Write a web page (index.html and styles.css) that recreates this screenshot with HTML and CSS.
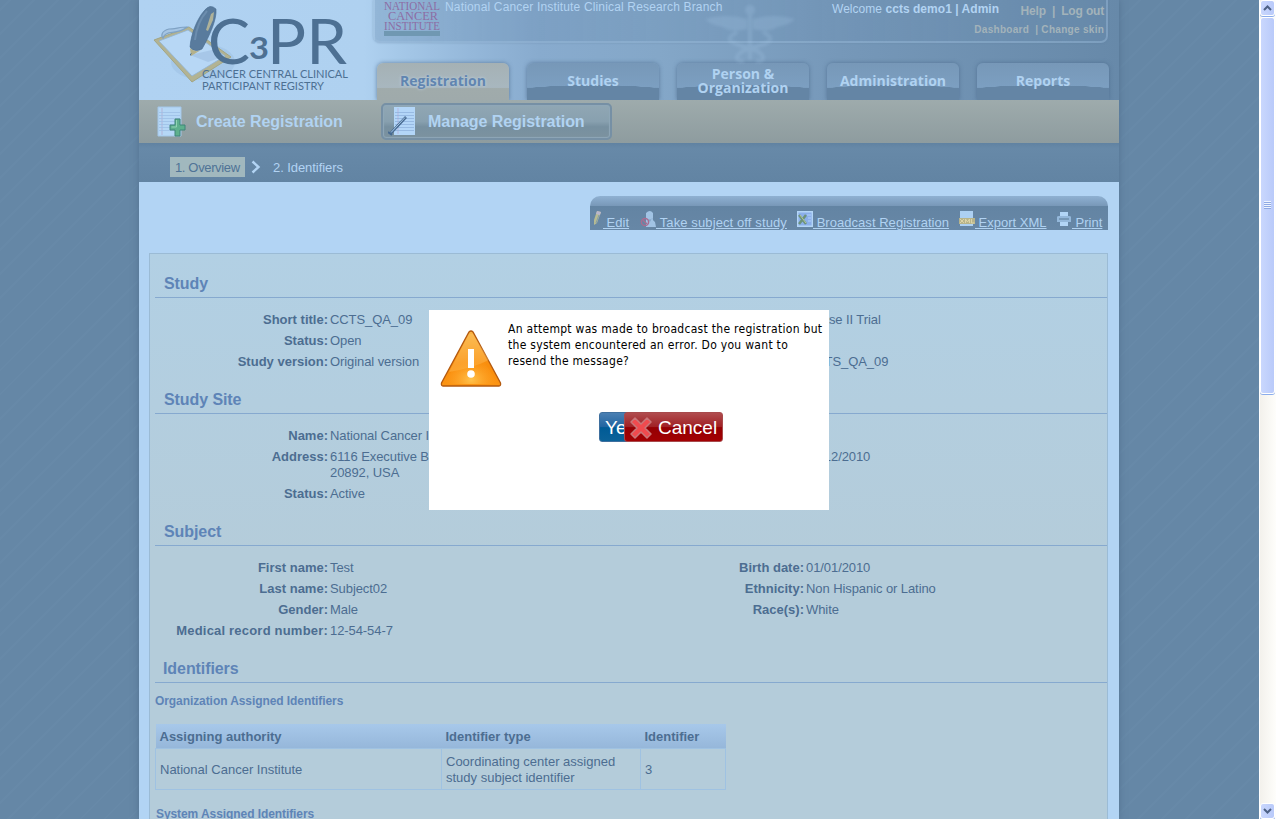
FILE: index.html
```html
<!DOCTYPE html>
<html lang="en">
<head>
<meta charset="utf-8">
<title>C3PR - Manage Registration</title>
<link rel="stylesheet" href="styles.css">
</head>
<body>
<div class="viewport">
  <div class="page">
    <header class="header">
      <svg class="caduceus" width="96" height="58" viewBox="0 0 96 58">
        <g fill="#a9cae9">
          <circle cx="47" cy="5" r="5"/>
          <path d="M2 14 Q24 8 44 14 L44 24 Q28 28 20 22 Q8 20 2 14Z M92 14 Q70 8 50 14 L50 24 Q66 28 74 22 Q86 20 92 14Z"/>
          <path d="M45 10h4v45h-4z"/>
        </g>
        <path d="M34 27 C14 38 40 40 54 46 C64 52 60 57 53 56 M60 27 C80 38 54 40 40 46 C30 52 34 57 41 56" fill="none" stroke="#a9cae9" stroke-width="4"/>
      </svg>
      <div class="brand">
        <svg width="234" height="100" viewBox="139 0 234 100">
          <ellipse cx="203" cy="62" rx="32" ry="18" fill="#8fb3d7" opacity=".3"/>
          <path d="M154 40 L189 27 L231 57 L192 82Z" fill="#b2b393" stroke="#a3a684" stroke-width="1"/>
          <path d="M159 41 L188 30 L225 56 L192 76Z" fill="#b7d7f5" stroke="#91b4d6" stroke-width=".8"/>
          <path d="M190 55 L212 50 L222 57 L208 62Z" fill="#9fc1e2" opacity=".7"/>
          <path d="M163 38 C166 29 176 36 187 27 C181 27 174 29 169 29 C161 31 161 36 163 38Z" fill="#a5c5e4" stroke="#7fa2c4" stroke-width="1.200"/>
          <path d="M190 47 C191 34 197 19 204 11 Q210 3 216 9 C217 19 210 35 202 49 Q194 53 190 47Z" fill="#597b9d" stroke="#486b8e" stroke-width=".6"/>
          <path d="M206 30 L211 14 L214 12 L213 20 L208 31Z" fill="#afb299"/>
          <path d="M195 40 Q197 22 207 11" fill="none" stroke="#6c8dae" stroke-width="2"/>
          <path d="M190 48 Q195 53 201 50 L191 56Z" fill="#b4b18b"/>
          <path d="M190 54l2-1-2 3z" fill="#446788"/>
          <text class="logo-big" x="208" y="64" textLength="42" lengthAdjust="spacingAndGlyphs">C</text>
          <text class="logo-three" x="249" y="59" textLength="20" lengthAdjust="spacingAndGlyphs">3</text>
          <text class="logo-big" x="267" y="64" textLength="80" lengthAdjust="spacingAndGlyphs">PR</text>
          <text class="logo-sub" x="202" y="78" textLength="146" lengthAdjust="spacingAndGlyphs">CANCER CENTRAL CLINICAL</text>
          <text class="logo-sub" x="202" y="90" textLength="122" lengthAdjust="spacingAndGlyphs">PARTICIPANT REGISTRY</text>
        </svg>
      </div>
      <div class="head-right">
        <div class="info">
          <svg class="nci" width="58" height="37" viewBox="0 0 58 37">
            <rect x="0" y="31" width="56" height="5" fill="#7098b2"/>
            <text x="0" y="9.500" textLength="56" lengthAdjust="spacingAndGlyphs">NATIONAL</text>
            <text x="4" y="19.800" textLength="50" lengthAdjust="spacingAndGlyphs">CANCER</text>
            <text x="0" y="30" textLength="56" lengthAdjust="spacingAndGlyphs">INSTITUTE</text>
          </svg>
          <span class="branch">National Cancer Institute Clinical Research Branch</span>
          <span class="welcome">Welcome <b>ccts demo1 | Admin</b></span>
          <div class="links">
            <div class="links-main"><b>Help</b><b>|</b><b>Log out</b></div>
            <div class="links-sub"><b>Dashboard</b><b>| Change skin</b></div>
          </div>
        </div>
        <nav class="tabs">
          <div class="tab tab-active"><span>Registration</span></div>
          <div class="tab"><span>Studies</span></div>
          <div class="tab"><span>Person &amp;<br>Organization</span></div>
          <div class="tab"><span>Administration</span></div>
          <div class="tab"><span>Reports</span></div>
        </nav>
      </div>
    </header>

    <div class="subnav">
      <div class="sub-item">
        <svg width="30" height="32" viewBox="0 0 30 32">
          <path d="M1 1h23v29H1z" fill="#b5d7f6" stroke="#a3c6e8"/>
          <path d="M5 2v27" stroke="#b2a9cf" stroke-width=".8"/>
          <path d="M2 6.500h21M2 9.500h21M2 12.500h21M2 15.500h21M2 18.500h21M2 21.500h21M2 24.500h21" stroke="#9dbfe6" stroke-width=".8"/>
          <path d="M18 13h5v6h5v5h-5v6h-5v-6h-5v-5h5z" fill="#5eb08d" stroke="#3e8478"/>
          <path d="M19.500 14v7h-5" fill="none" stroke="#92d2b5"/>
        </svg>
        <span>Create Registration</span>
      </div>
      <div class="sub-item sub-current">
        <svg width="30" height="32" viewBox="0 0 30 32">
          <path d="M6 1h21v28H6z" fill="#b3d6f8"/>
          <path d="M10 2v26" stroke="#b9a9d2" stroke-width=".7"/>
          <path d="M7 6.500h19M7 9.500h19M7 12.500h19M7 15.500h19M7 18.500h19M7 21.500h19M7 24.500h19" stroke="#8fb3dd" stroke-width=".8"/>
          <path d="M2 28L18 11" stroke="#476a91" stroke-width="2.600"/>
          <path d="M3 26.500L17 11.500" stroke="#a5c7e8" stroke-width="1"/>
          <path d="M0 26l4 3" stroke="#476a91" stroke-width="2"/>
        </svg>
        <span>Manage Registration</span>
      </div>
    </div>

    <div class="crumbs">
      <span class="crumb-on">1. Overview</span>
      <svg width="10" height="14" viewBox="0 0 10 14"><path d="M1.500 1.500L7.500 7L1.500 12.500" fill="none" stroke="#b2d4f4" stroke-width="2.400"/></svg>
      <span class="crumb">2. Identifiers</span>
    </div>

    <main class="content">
      <div class="toolbar">
        <a><svg width="11" height="16" viewBox="0 0 11 16"><path d="M5 0l4 1-4 11-3 2V9z" fill="#b7bb92"/><path d="M5 0l4 1-1 3-4-1z" fill="#b9b6cd"/><path d="M7 4L4 12" stroke="#829cab"/></svg><u class="t-edit">&nbsp;Edit</u></a>
        <a><svg width="16" height="16" viewBox="0 0 16 16"><path d="M6 2q4-4 7 0v5q-1 2 2 4l1 5H6V9z" fill="#a1c3e4"/><path d="M7 7q3 3 5 0l-2 4z" fill="#82a6ca"/><circle cx="5" cy="11" r="3.600" fill="none" stroke="#a96d91" stroke-width="1.500"/><path d="M3 9l4 4" stroke="#a96d91" stroke-width="1.500"/></svg><u class="t-take">&nbsp;Take subject off study</u></a>
        <a><svg width="16" height="16" viewBox="0 0 16 16"><path d="M.7.700h14.600v14.600H.7z" fill="#8bafea" stroke="#b3d5f6" stroke-width="1.400"/><path d="M2 4l7 9M9 4l-7 9" stroke="#6c927b" stroke-width="2.500"/><path d="M3 4l6 8" stroke="#b4c99e"/><path d="M10 4h4M11 7h3M11 10h3" stroke="#b1d2fa"/></svg><u class="t-cast">&nbsp;Broadcast Registration</u></a>
        <a><svg width="16" height="16" viewBox="0 0 16 16"><path d="M1 0h13v15H1z" fill="#acd0f2"/><path d="M0 7h16v6H0z" fill="#b7b48b"/><path d="M1 8l4 4M5 8l-4 4M6.500 12V8l2 3 2-3v4M12.500 8v4h3" fill="none" stroke="#e0d8aa" stroke-width=".9"/></svg><u class="t-xml">&nbsp;Export XML</u></a>
        <a><svg width="16" height="16" viewBox="0 0 16 16"><path d="M4 1h8v4H4z" fill="#b2d5f6"/><path d="M1 6q0-1 2-1h10q2 0 2 1v5H1z" fill="#94b8db"/><path d="M3 7h10v2H3z" fill="#7799b8"/><path d="M4 11h8v4H4z" fill="#b2d5f6"/></svg><u class="t-print">&nbsp;Print</u></a>
      </div>

      <div class="panel">
        <h2>Study</h2>
        <div class="cols">
          <dl>
            <dt>Short title:</dt><dd>CCTS_QA_09</dd>
            <dt>Status:</dt><dd>Open</dd>
            <dt>Study version:</dt><dd>Original version</dd>
          </dl>
          <dl>
            <dt></dt><dd>Phase II Trial</dd>
            <dt></dt><dd>&nbsp;</dd>
            <dt></dt><dd>CCTS_QA_09</dd>
          </dl>
        </div>
        <h2>Study Site</h2>
        <div class="cols">
          <dl>
            <dt>Name:</dt><dd>National Cancer Institute</dd>
            <dt>Address:</dt><dd>6116 Executive Blvd<br>20892, USA</dd>
            <dt>Status:</dt><dd>Active</dd>
          </dl>
          <dl>
            <dt></dt><dd>&nbsp;</dd>
            <dt></dt><dd>01/12/2010</dd>
          </dl>
        </div>
        <h2>Subject</h2>
        <div class="cols">
          <dl>
            <dt>First name:</dt><dd>Test</dd>
            <dt>Last name:</dt><dd>Subject02</dd>
            <dt>Gender:</dt><dd>Male</dd>
            <dt class="wide">Medical record number:</dt><dd>12-54-54-7</dd>
          </dl>
          <dl>
            <dt>Birth date:</dt><dd>01/01/2010</dd>
            <dt>Ethnicity:</dt><dd>Non Hispanic or Latino</dd>
            <dt>Race(s):</dt><dd>White</dd>
          </dl>
        </div>
        <h2 class="h-ident">Identifiers</h2>
        <h3>Organization Assigned Identifiers</h3>
        <table>
          <tr><th class="c1">Assigning authority</th><th class="c2">Identifier type</th><th class="c3">Identifier</th></tr>
          <tr><td>National Cancer Institute</td><td>Coordinating center assigned study subject identifier</td><td>3</td></tr>
        </table>
        <h3 class="h-system">System Assigned Identifiers</h3>
      </div>
    </main>
  </div>

  <div class="scrollbar">
    <div class="sb-btn"><svg width="9" height="6" viewBox="0 0 9 6"><path d="M1 5l3.500-3.500L8 5" fill="none" stroke="#4d6185" stroke-width="2"/></svg></div>
    <div class="sb-thumb"><i></i><i></i><i></i><i></i></div>
    <div class="sb-track"></div>
    <div class="sb-btn"><svg width="9" height="6" viewBox="0 0 9 6"><path d="M1 1l3.500 3.500L8 1" fill="none" stroke="#4d6185" stroke-width="2"/></svg></div>
  </div>

  <div class="dialog">
    <div class="dialog-body">
      <svg width="64" height="60" viewBox="0 0 64 60">
        <defs>
          <linearGradient id="warn" x1="0" y1="0" x2="0" y2="1"><stop offset="0" stop-color="#f9b545"/><stop offset=".6" stop-color="#f98d0c"/><stop offset="1" stop-color="#fb9413"/></linearGradient>
          <radialGradient id="glow" cx=".5" cy=".9" r=".5"><stop offset="0" stop-color="#ffc34d"/><stop offset="1" stop-color="#ff9d20" stop-opacity="0"/></radialGradient>
        </defs>
        <path d="M30 2Q32 0 34 2L61.500 53Q62 56 60 56H4Q2 56 2.500 53Z" fill="url(#warn)" stroke="#b4590e" stroke-width="1.300"/>
        <path d="M30 4L10 42Q34 38 50 30L34 4Z" fill="#ffd07b" opacity=".3"/>
        <path d="M5 54L32 10L59 54Z" fill="url(#glow)"/>
        <path d="M29 19h6v19h-6z" fill="#fff"/><circle cx="32" cy="44" r="3.800" fill="#fff"/>
      </svg>
      <p>An attempt was made to broadcast the registration but the system encountered an error. Do you want to resend the message?</p>
    </div>
    <div class="dialog-actions">
      <span class="btn btn-yes">Yes</span>
      <span class="btn btn-cancel">
        <svg width="24" height="24" viewBox="0 0 24 24"><path d="M6 2L12 8L18 2L22 6L16 12L22 18L18 22L12 16L6 22L2 18L8 12L2 6Z" fill="#f04a4e" stroke="#c9777a" stroke-width="1.500" stroke-linejoin="round"/></svg>
        <span>Cancel</span>
      </span>
    </div>
  </div>
</div>
</body>
</html>
```

FILE: styles.css
```css
* { box-sizing: border-box; }

body {
  margin: 0;
  overflow: hidden;
  font: 13px/16px "Liberation Sans", Arial, sans-serif;
  color: #4c6d91;
}

h2, h3, p, dl, dd { margin: 0; }

.viewport {
  position: relative;
  display: flex;
  width: 1276px;
  height: 819px;
  overflow: hidden;
  padding-left: 139px;
  background: repeating-linear-gradient(135deg, #6587a6 0 6px, #6789a8 6px 8px, #6587a6 8px 17px);
}

.page {
  width: 980px;
  height: 819px;
  margin-right: 140px;
  overflow: hidden;
  flex: none;
  background: #b2d4f4;
  box-shadow: 0 0 7px rgba(70, 100, 130, .6);
}

/* Header */
.header {
  position: relative;
  display: grid;
  grid-template-columns: 234px 746px;
  height: 100px;
  background: linear-gradient(90deg, #b0d2f2 0, #afd1f0 225px, #a5c8e8 260px, #95b8da 330px, #88abce 400px, #84a7c8 520px, #7698b9 700px, #6789a9 980px);
}

.caduceus { position: absolute; left: 564px; top: 5px; opacity: .22; filter: blur(1.5px); }

.brand svg { display: block; }
.logo-big { font: 61px Lato, sans-serif; fill: #4d7093; }
.logo-three { font: bold 30px Lato, sans-serif; fill: #4d7093; }
.logo-sub { font: 11.500px Lato, sans-serif; fill: #4d7093; }

.info {
  display: flex;
  width: 735px;
  height: 43px;
  padding-left: 9px;
  border: 2px solid rgba(160, 192, 222, .4);
  border-top: 0;
  border-radius: 0 0 7px 7px;
  background: linear-gradient(90deg, rgba(100, 137, 174, .35), rgba(100, 137, 174, .12));
  box-shadow: 0 0 2px rgba(85, 115, 150, .4);
  font-size: 12px;
  line-height: 14px;
  color: #b2d3f2;
}

.nci { flex: none; overflow: visible; }
.nci text { font: 13px "Liberation Serif", serif; fill: #8d6da4; }
.branch { flex: none; width: 279px; margin-left: 3px; white-space: nowrap; letter-spacing: .16px; }
.welcome { flex: none; margin: 2px 0 0 108px; white-space: nowrap; letter-spacing: .04px; }
.links { flex: none; width: 129px; margin: 4px 0 0 -24px; color: #a3b3ba; white-space: nowrap; }
.links-main { display: flex; justify-content: flex-end; gap: 6px; letter-spacing: -.15px; }
.links-sub { display: flex; justify-content: flex-end; gap: 6px; margin-top: 5px; font-size: 10px; letter-spacing: .3px; }

.tabs { display: flex; gap: 18px; padding: 20px 0 0 4px; }

.tab {
  display: flex;
  align-items: center;
  justify-content: center;
  width: 132px;
  height: 37px;
  border-radius: 6px 6px 0 0;
  background: radial-gradient(ellipse 110px 15px at 50% 100%, #6485a5 0 98%, transparent 100%), linear-gradient(#7798b8 0, #7c9fc1 66%, #6687a7 68%, #6384a3 100%);
  box-shadow: 0 0 4px rgba(75, 106, 140, .75);
  font: bold 14px/14px "Open Sans", "Noto Sans", sans-serif;
  text-align: center;
  color: #b0d2f1;
}
.tab span { padding-bottom: 1px; }

.tab-active {
  background: linear-gradient(#a5b1b4 0, #a8b7bf 66%, #a0abab 69%, #9faaab 100%);
  color: #6185b0;
  text-shadow: 0 0 3px #c0d5e5;
}

/* Secondary navigation */
.subnav {
  position: relative;
  display: flex;
  height: 43px;
  padding: 3px 0 3px 18px;
  background: linear-gradient(#9eabac, #8e9c9f);
}

.sub-item {
  display: flex;
  align-items: center;
  gap: 9px;
  width: 224px;
  height: 37px;
  font-size: 16px;
  font-weight: bold;
  letter-spacing: -.04px;
  color: #b1d3f2;
  white-space: nowrap;
}

.sub-current {
  width: 231px;
  padding-left: 5px;
  border: 2px solid #7690a5;
  border-radius: 5px;
  background: linear-gradient(#90a7b4 0, #88a0af 50%, #7790a0 66%, #7c929f 100%);
  box-shadow: inset 0 0 1px 1px #8fa8b8;
}
.sub-current span { padding-left: 1px; }

/* Breadcrumb */
.crumbs {
  display: flex;
  align-items: center;
  height: 39px;
  padding: 10px 0 0 31px;
  background: linear-gradient(#6082a1, #6789a8 5px, #6284a3);
  color: #b2d3f3;
}
.crumbs svg { margin: 0 12px 2px 6px; }
.crumb-on { width: 75px; height: 20px; margin-bottom: 1px; padding: 3px 0 0 5px; background: #a1b8be; color: #4f7396; letter-spacing: -.36px; }
.crumb { letter-spacing: -.07px; }

/* Content */
.content { padding: 14px 10px 0; }

.toolbar {
  display: flex;
  gap: 10px;
  width: 518px;
  height: 34px;
  margin-left: auto;
  margin-right: 1px;
  padding: 15px 0 0 2px;
  border-radius: 10px 10px 0 0;
  background: linear-gradient(#8fb1d2 0, #7898b8 10px, #6384a3 10px, #6787a6 100%);
  color: #b0d2f2;
}
.toolbar a { display: flex; flex: none; }
.toolbar u { padding-top: 4px; white-space: nowrap; text-underline-offset: 1px; }
.t-edit { width: 27px; }
.t-take { width: 131px; letter-spacing: .11px; }
.t-cast { width: 136px; letter-spacing: .04px; }
.t-xml { width: 71px; }
.t-print { width: 31px; }

.panel {
  width: 959px;
  height: 600px;
  margin-top: 23px;
  padding: 4px 0 0 5px;
  border: 1px solid #9bbbd5;
  background: linear-gradient(#b2d0e4, #b4ccda 300px);
}

h2 {
  display: flex;
  align-items: flex-end;
  height: 40px;
  padding: 0 0 4px 9px;
  border-bottom: 1px solid #86a9cf;
  font-size: 16px;
  line-height: 18px;
  letter-spacing: -.08px;
  color: #5e84b7;
}
.h-ident { padding-left: 8px; }

h3 { margin-top: 10px; font-size: 12px; line-height: 16px; letter-spacing: -.08px; color: #5e84b7; }
.h-system { margin: 16px 0 0 1px; }

.cols { display: grid; grid-template-columns: 476px 476px; margin-bottom: -1px; padding-top: 14px; }
dl { display: grid; grid-template-columns: 173px 1fr; align-content: start; column-gap: 2px; }
dt { font-weight: bold; text-align: right; }
.wide { letter-spacing: .2px; }
dd { padding-bottom: 5px; letter-spacing: -.08px; }

table { width: 571px; margin-top: 15px; border-collapse: collapse; table-layout: fixed; }
th {
  height: 24px;
  padding: 2px 4px 0;
  background: linear-gradient(#a7c8ea, #96b7da);
  text-align: left;
}
td { height: 41px; padding: 2px 4px 0; border: 1px solid #9fc2e2; }
.c1 { width: 286px; }
.c2 { width: 199px; }
.c3 { width: 85px; }

/* Browser scrollbar */
.scrollbar {
  display: flex;
  flex-direction: column;
  flex: none;
  width: 17px;
  height: 819px;
  padding-left: 1px;
  background: linear-gradient(90deg, #fff 0 1px, #f3f1ec 1px, #fefefb);
}
.sb-btn, .sb-thumb {
  display: flex;
  flex: none;
  align-items: center;
  justify-content: center;
  width: 15px;
  border: 1px solid #fff;
  border-radius: 3px;
  background: linear-gradient(90deg, #c9d7fd, #b9cafa);
  box-shadow: 0 1px 0 #8badec;
}
.sb-btn { height: 16px; }
.sb-thumb { flex-direction: column; gap: 1px; height: 377px; margin-top: 1px; }
.sb-thumb i { width: 7px; height: 1px; background: #8ea9e4; box-shadow: 0 -1px #eef4fe; }
.sb-track { flex: 1; }

/* Dialog */
.dialog {
  position: absolute;
  left: 429px;
  top: 310px;
  width: 400px;
  height: 200px;
  padding: 10px 0 0 10px;
  background: #fff;
  color: #000;
}
.dialog-body { display: flex; }
.dialog-body svg { flex: none; margin-top: 10px; }
.dialog-body p {
  width: 318px;
  margin-left: 5px;
  padding-top: 1px;
  font: 12px/16px "DejaVu Sans Condensed", "DejaVu Sans", Verdana, sans-serif;
  letter-spacing: .29px;
}
.dialog-actions { display: flex; margin: 22px 0 0 160px; }
.btn {
  display: flex;
  align-items: center;
  height: 30px;
  padding-top: 2px;
  border-radius: 3px;
  font-size: 19px;
  color: #fff;
}
.btn-yes { width: 40px; padding-left: 5px; border: 1px solid #3e6f9e; background: linear-gradient(#4a7fb2, #2164a0 50%, #005b96 52%, #0b6299); }
.btn-cancel {
  z-index: 1;
  width: 99px;
  margin-left: -15px;
  padding-left: 4px;
  gap: 5px;
  border: 1px solid #a84a4c;
  background: linear-gradient(#b04c4e, #a02024 50%, #940003 52%, #a30003);
}
```
